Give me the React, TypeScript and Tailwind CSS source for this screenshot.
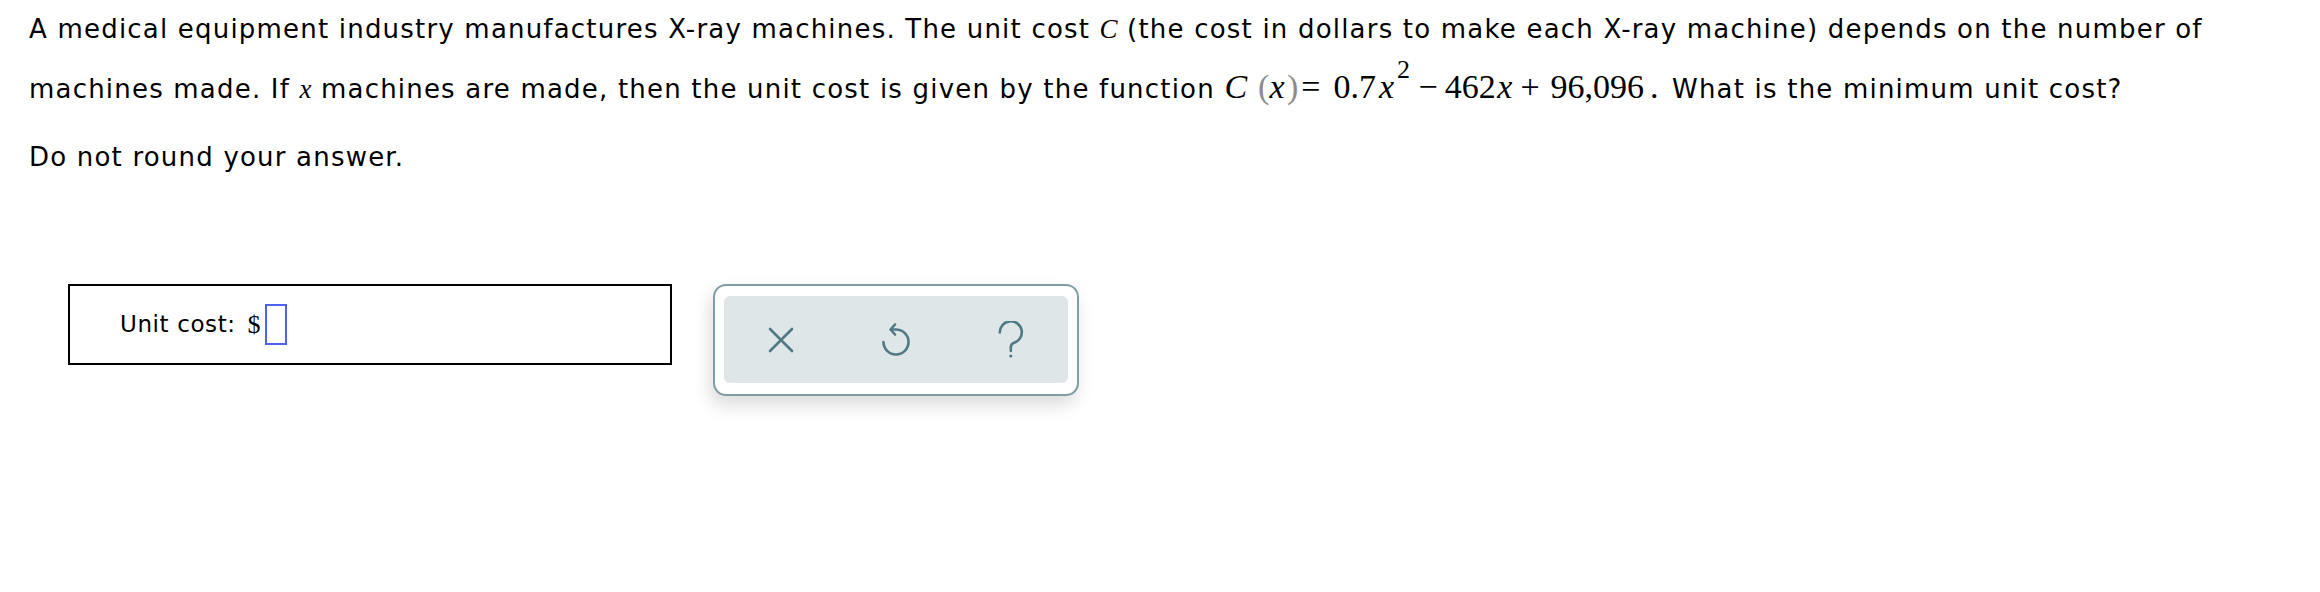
import React from 'react';

const sans = "font-['DejaVu_Sans',Verdana,sans-serif]";
const serif = "font-['Liberation_Serif','Times_New_Roman',serif]";

const Paren: React.FC<{ children: React.ReactNode; className?: string }> = ({ children, className }) => (
    <span className={`text-[#8c8c8c] not-italic ${className ?? ''}`}>{children}</span>
);

const Toolbar: React.FC = () => (
    <div className="w-[366px] h-[112px] rounded-[13px] border-2 border-[#7f9ea4] bg-white px-[9px] pt-[10px] pb-[11px] shadow-[-3px_9px_18px_rgba(0,0,0,0.14)]">
        <div className="h-full rounded-[6px] bg-[#dfe6e8] grid grid-cols-3 items-center justify-items-center text-[#4f7984]">
            {/* clear */}
            <svg width="26" height="26" viewBox="0 0 26 26" fill="none" stroke="currentColor" strokeWidth="2.6" strokeLinecap="round">
                <path d="M2 2 24 24M24 2 2 24" />
            </svg>
            {/* undo */}
            <svg width="30" height="34" viewBox="0 0 30 34" fill="none" stroke="currentColor" strokeWidth="2.6" strokeLinecap="round" strokeLinejoin="round">
                <path d="M2.5 19a12.5 12.5 0 1 0 12.5-12.5H11" />
                <path d="M14 1.5 9.5 6.5 14 11.5" />
            </svg>
            {/* help */}
            <svg width="26" height="38" viewBox="0 0 26 38" fill="none" stroke="currentColor" strokeWidth="2.6" strokeLinecap="round">
                <path d="M1.8 11.5A11 11 0 1 1 16 21.8c-2.4 .9-3.2 2.3-3.2 4.6v3.6" />
                <circle cx="12.8" cy="35" r="1.6" fill="currentColor" stroke="none" />
            </svg>
        </div>
    </div>
);

const App: React.FC = () => {
    return (
        <div className={`min-h-screen bg-white text-black ${sans} text-[26px]`}>
            {/* Question text */}
            <div className="pl-[29px] tracking-[1.2px]">
                <div className="leading-[58px] whitespace-nowrap">
                    A medical equipment industry manufactures X-ray machines. The unit cost{' '}
                    <i className={`${serif} text-[27px] leading-none tracking-normal`}>C</i>{' '}
                    (the cost in dollars to make each X-ray machine) depends on the number of
                </div>
                <div className="leading-[62px] whitespace-nowrap">
                    machines made. If <i className={`${serif} text-[27px] leading-none tracking-normal`}>x</i> machines are made, then the unit cost is given by the function{' '}
                    <span className={`${serif} text-[34px] leading-none tracking-normal`}>
                        <i>C</i>
                        <Paren className="ml-[11px]">(</Paren>
                        <i>x</i>
                        <Paren className="ml-[2.5px]">)</Paren>
                        <span className="ml-[3px] mr-[13px]">=</span>
                        <span>0.7</span>
                        <i className="ml-[3px]">x</i>
                        <span className="text-[26px] relative -top-[20px] ml-[3px]">2</span>
                        <span className="ml-[8.5px] mr-[7px]">−</span>
                        <span>462</span>
                        <i className="ml-[1.5px]">x</i>
                        <span className="ml-[8px] mr-[11px]">+</span>
                        <span>96,096</span>
                        <span className="ml-[6px] mr-[4px]">.</span>
                    </span>{' '}
                    What is the minimum unit cost?
                </div>
                <div className="leading-[40px] mt-[17px]">Do not round your answer.</div>
            </div>

            {/* Answer area */}
            <div className="mt-[107px] pl-[68px] flex items-start gap-[41px]">
                <div className="w-[604px] h-[81px] border-2 border-black flex items-center pl-[50px]">
                    <span className="text-[23px] tracking-[0.6px]">Unit cost:</span>
                    <span className={`${serif} text-[26px] ml-[12px]`}>$</span>
                    <div className="ml-[4px] w-[22px] h-[41px] border-2 border-[#4c63f2]" />
                </div>
                <Toolbar />
            </div>
        </div>
    );
};

export default App;
